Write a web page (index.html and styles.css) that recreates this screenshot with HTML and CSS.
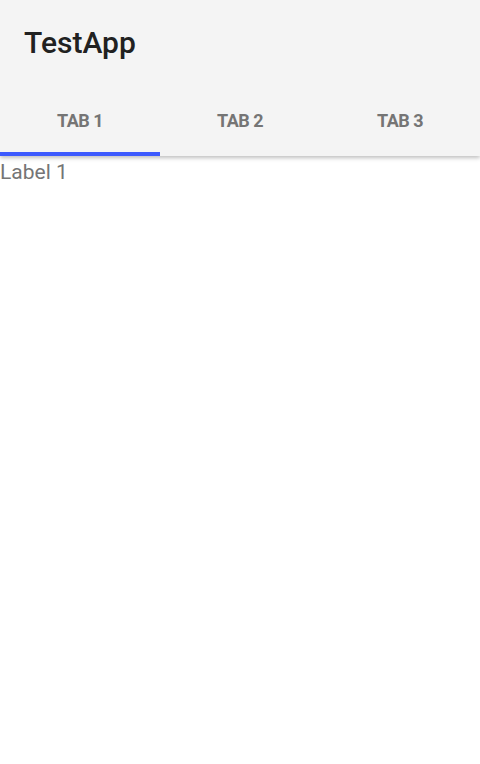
FILE: index.html
```html
<!DOCTYPE html>
<html>
<head>
<meta charset="utf-8">
<link rel="stylesheet" href="styles.css">
</head>
<body>
<div class="app">
  <header class="appbar">
    <div class="toolbar"><span class="title">TestApp</span></div>
    <nav class="tabs">
      <div class="tab active">TAB 1</div>
      <div class="tab">TAB 2</div>
      <div class="tab">TAB 3</div>
    </nav>
  </header>
  <main class="content">
    <div class="label">Label 1</div>
  </main>
</div>
</body>
</html>
```
FILE: styles.css
```css
html, body {
  margin: 0;
  padding: 0;
  background: #ffffff;
  font-family: Roboto, "Noto Sans", sans-serif;
}
.app {
  width: 480px;
  height: 764px;
  display: flex;
  flex-direction: column;
}
.appbar {
  background: #f4f4f4;
  box-shadow: 0 2px 4px rgba(0,0,0,0.25);
  position: relative;
  z-index: 1;
}
.toolbar {
  height: 88px;
  display: flex;
  align-items: center;
  padding: 0 24px;
  box-sizing: border-box;
}
.title {
  font-size: 30px;
  font-weight: 500;
  color: #212121;
  margin-top: -3px;
}
.tabs {
  display: flex;
  height: 68px;
}
.tab {
  flex: 1;
  display: flex;
  align-items: center;
  justify-content: center;
  font-size: 18px;
  font-weight: 700;
  letter-spacing: -0.5px;
  color: #757575;
  box-sizing: border-box;
  border-bottom: 4px solid transparent;
  padding-top: 0;
}
.tab.active {
  border-bottom-color: #3d5afe;
}
.content {
  flex: 1;
}
.label {
  font-size: 21px;
  color: #757575;
  line-height: 32px;
}
```
